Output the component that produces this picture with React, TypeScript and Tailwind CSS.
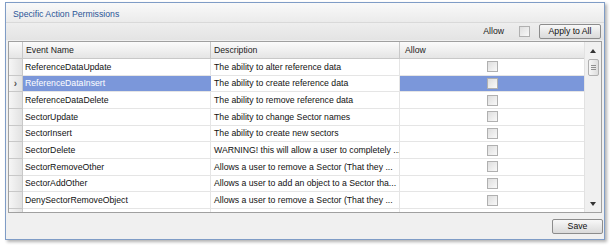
import React from 'react';

interface Permission {
  name: string;
  description: string;
}

const permissions: Permission[] = [
  { name: 'ReferenceDataUpdate', description: 'The ability to alter reference data' },
  { name: 'ReferenceDataInsert', description: 'The ability to create reference data' },
  { name: 'ReferenceDataDelete', description: 'The ability to remove reference data' },
  { name: 'SectorUpdate', description: 'The ability to change Sector names' },
  { name: 'SectorInsert', description: 'The ability to create new sectors' },
  { name: 'SectorDelete', description: 'WARNING! this will allow a user to completely ...' },
  { name: 'SectorRemoveOther', description: 'Allows a user to remove a Sector (That they ...' },
  { name: 'SectorAddOther', description: 'Allows a user to add an object to a Sector tha...' },
  { name: 'DenySectorRemoveObject', description: 'Allows a user to remove a Sector (That they ...' },
];

function CheckBox() {
  return (
    <span className="inline-block w-[11px] h-[11px] border border-[#b0b0b0] bg-gradient-to-br from-[#dedede] to-[#f9f9f9]" />
  );
}

export default function App() {
  const selected = 1;

  return (
    <div
      className="w-[615px] h-[249px] bg-white pt-[2px] pl-[5px]"
      style={{ fontFamily: '"Liberation Sans", Arial, sans-serif' }}
    >
      <div className="w-[600px] h-[238px] border border-[#7f9cc6] shadow-[2px_2px_3px_rgba(0,0,0,0.3)] bg-[#f0f0f0] flex flex-col">
        {/* title */}
        <div className="h-[20px] shrink-0 border-b border-[#d9d9d9] bg-gradient-to-b from-[#f9f9f9] to-[#ebebeb] flex items-center pt-[4px] px-[7px] text-[8.7px] text-[#2a5597]">
          Specific Action Permissions
        </div>

        {/* toolbar */}
        <div className="h-[17px] shrink-0 flex items-center justify-end pr-[3px] bg-gradient-to-b from-[#eeeeee] to-[#e4e4e4] text-[8.7px] text-[#222]">
          <span>Allow</span>
          <span className="ml-[15px] flex">
            <CheckBox />
          </span>
          <button className="ml-[9px] h-[15px] w-[62px] border border-[#8c8c8c] rounded-[2px] bg-gradient-to-b from-[#f8f8f8] to-[#dadada] text-[8.7px] leading-none text-[#111] whitespace-nowrap">
            Apply to All
          </button>
        </div>

        {/* grid */}
        <div className="ml-[2px] mr-[2px] mt-[1px] h-[172px] shrink-0 border border-[#a0a0a0] bg-white flex overflow-hidden">
          <div className="flex-1 flex flex-col">
            <div className="h-[17px] shrink-0 flex border-b border-[#c8c8c8] bg-gradient-to-b from-[#fbfbfb] to-[#e5e5e5] text-[8.7px] text-[#222]">
              <div className="w-[14px] border-r border-[#c8c8c8]" />
              <div className="w-[188px] border-r border-[#c8c8c8] px-[3px] pt-[1px] flex items-center">Event Name</div>
              <div className="w-[189px] border-r border-[#c8c8c8] px-[3px] pt-[1px] flex items-center">Description</div>
              <div className="flex-1 px-[5px] pt-[1px] flex items-center">Allow</div>
            </div>
            {permissions.map((p, i) => {
              const isSel = i === selected;
              return (
                <div key={p.name} className="h-[16.66px] flex text-[8.7px] shrink-0">
                  <div className="w-[14px] border-r border-b border-[#c8c8c8] bg-gradient-to-r from-[#f6f6f6] to-[#e2e2e2] flex items-center justify-center text-[10px] font-bold text-[#555]">
                    {isSel ? '›' : ''}
                  </div>
                  <div
                    className={
                      isSel
                        ? 'w-[188px] bg-[#7b97da] text-white px-[2px] pt-[1px] flex items-center border-b border-[#e5e5e5] whitespace-nowrap'
                        : 'w-[188px] bg-white text-[#111] px-[2px] pt-[1px] flex items-center border-r border-b border-[#e5e5e5] whitespace-nowrap'
                    }
                  >
                    {p.name}
                  </div>
                  <div className="w-[189px] bg-white text-[#111] px-[3px] pt-[1px] flex items-center border-r border-b border-[#e5e5e5] whitespace-nowrap overflow-hidden">
                    {p.description}
                  </div>
                  <div
                    className={
                      isSel
                        ? 'flex-1 bg-[#7b97da] flex items-center justify-center border-b border-[#e5e5e5]'
                        : 'flex-1 bg-white flex items-center justify-center border-b border-[#e5e5e5]'
                    }
                  >
                    <CheckBox />
                  </div>
                </div>
              );
            })}
            <div className="flex flex-1">
              <div className="w-[14px] border-r border-[#c8c8c8] bg-gradient-to-r from-[#f6f6f6] to-[#e2e2e2]" />
              <div className="w-[188px] border-r border-[#e5e5e5]" />
              <div className="w-[189px] border-r border-[#e5e5e5]" />
            </div>
          </div>
          {/* scrollbar */}
          <div className="w-[17px] bg-[#f0f0f0] border-l border-[#e2e2e2] flex flex-col items-center">
            <div className="h-[17px] flex items-center justify-center">
              <span className="w-0 h-0 border-l-[3.5px] border-r-[3.5px] border-b-[4px] border-l-transparent border-r-transparent border-b-[#333]" />
            </div>
            <div className="w-[11px] h-[17px] border border-[#b0b0b0] rounded-[2px] bg-gradient-to-r from-[#f7f7f7] to-[#dddddd] flex flex-col items-center justify-center gap-[1px]">
              <span className="w-[5px] h-px bg-[#909090]" />
              <span className="w-[5px] h-px bg-[#909090]" />
              <span className="w-[5px] h-px bg-[#909090]" />
            </div>
            <div className="flex-1" />
            <div className="h-[17px] flex items-center justify-center">
              <span className="w-0 h-0 border-l-[3.5px] border-r-[3.5px] border-t-[4px] border-l-transparent border-r-transparent border-t-[#333]" />
            </div>
          </div>
        </div>

        {/* footer */}
        <div className="flex-1 flex items-center justify-end pr-[1px]">
          <button className="h-[15px] w-[51px] border border-[#8c8c8c] rounded-[2px] bg-gradient-to-b from-[#f8f8f8] to-[#dadada] text-[8.7px] leading-none text-[#111]">
            Save
          </button>
        </div>
      </div>
    </div>
  );
}
